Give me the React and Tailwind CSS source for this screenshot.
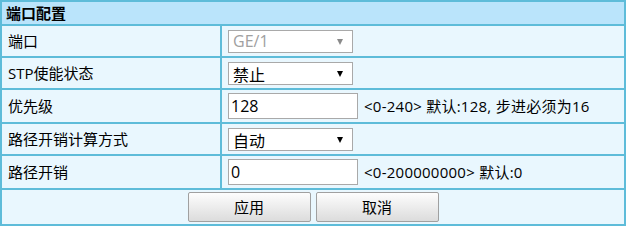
import React from 'react'

const font = { fontFamily: '"Open Sans", "Noto Sans CJK SC", sans-serif' }

function Select({ value, disabled, low }) {
  return (
    <div
      className={`relative w-[125px] h-[23px] overflow-hidden border border-[#a9a9a9] bg-white text-[16px] ${
        disabled ? 'text-[#a0a0a0]' : 'text-black'
      }`}
    >
      <span className={`absolute left-[4px] leading-[20px] ${low ? 'top-[2px]' : 'top-[0px]'}`}>{value}</span>
      <span
        className={`absolute right-[9px] top-[8px] w-0 h-0 border-l-[3.5px] border-r-[3.5px] border-t-[6px] border-l-transparent border-r-transparent ${
          disabled ? 'border-t-[#8a8a8a]' : 'border-t-black'
        }`}
      />
    </div>
  )
}

function Input({ value }) {
  return (
    <div className="w-[130px] h-[26px] border border-[#a9a9a9] bg-white pl-[2px] text-[16px] leading-[24px] text-black">
      {value}
    </div>
  )
}

function Row({ label, h, children }) {
  return (
    <div className={`grid grid-cols-[218px_402px] gap-[2px] ${h}`}>
      <div className="bg-[#e9f7fe] pl-[6px] flex items-center text-[15px] text-black">{label}</div>
      <div className="bg-[#e9f7fe] pl-[6px] flex items-center gap-[6px] text-[15px] text-black">{children}</div>
    </div>
  )
}

export default function App() {
  return (
    <div style={font} className="w-[626px] h-[226px] bg-[#5ebcd9] p-[2px] flex flex-col gap-[2px]">
      <div className="h-[22px] bg-[#bae4fb] pl-[4px] flex items-center text-[15px] font-bold text-black">
        端口配置
      </div>
      <Row label="端口" h="h-[30px]">
        <Select value="GE/1" disabled />
      </Row>
      <Row label="STP使能状态" h="h-[30px]">
        <Select value="禁止" low />
      </Row>
      <Row label="优先级" h="h-[32px]">
        <Input value="128" />
        <span className="tracking-[0.25px]">&lt;0-240&gt; 默认:128, 步进必须为16</span>
      </Row>
      <Row label="路径开销计算方式" h="h-[30px]">
        <Select value="自动" low />
      </Row>
      <Row label="路径开销" h="h-[32px]">
        <Input value="0" />
        <span className="tracking-[0.25px]">&lt;0-200000000&gt; 默认:0</span>
      </Row>
      <div className="flex-1 bg-[#e9f7fe] flex items-center justify-center gap-[5px]">
        <button className="w-[123px] h-[30px] border border-[#a0a0a0] rounded-[2px] bg-gradient-to-b from-[#fdfdfd] to-[#dcdcdc] text-[15px] text-black">
          应用
        </button>
        <button className="w-[123px] h-[30px] border border-[#a0a0a0] rounded-[2px] bg-gradient-to-b from-[#fdfdfd] to-[#dcdcdc] text-[15px] text-black">
          取消
        </button>
      </div>
    </div>
  )
}
